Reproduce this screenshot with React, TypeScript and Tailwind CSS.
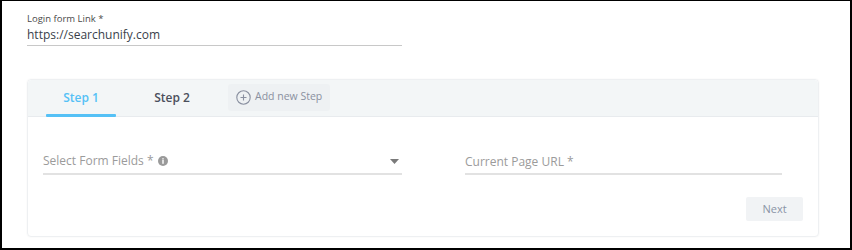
import React from "react";

export default function App() {
  return (
    <div
      className="w-[852px] h-[250px] bg-white border-black border-t border-l-2 border-r-2 border-b-2 box-border overflow-hidden"
      style={{ fontFamily: '"Open Sans", "Liberation Sans", sans-serif' }}
    >
      <div className="pl-[25px] pt-[11px]">
        <div className="w-[375px]">
          <div className="text-[9.5px] leading-[14px] text-[#4a4a4a]">Login form Link *</div>
          <div className="text-[12px] leading-[16px] text-[#3a3f4b] pt-[1px] pb-[2px] border-b border-[#c8c8c8]">
            https://searchunify.com
          </div>
        </div>
        <div className="mt-[33px] w-[792px] h-[158px] rounded-[4px] border border-[#eef0f2] shadow-[0_0_2px_rgba(0,0,0,0.05)] flex flex-col">
          <div className="h-[37px] bg-[#f3f6f7] border-b border-[#e8ebee] flex items-stretch pl-[18px] rounded-t-[4px]">
            <div className="relative w-[70px] flex items-center justify-center">
              <span className="text-[12px] font-semibold text-[#55c1f6]">Step 1</span>
              <div className="absolute left-0 right-0 bottom-[-1px] h-[3px] bg-[#55c1f6] rounded-[1px]" />
            </div>
            <div className="w-[112px] flex items-center justify-center">
              <span className="text-[12px] font-semibold text-[#4b4f5c]">Step 2</span>
            </div>
            <div className="flex items-center">
              <div className="h-[27px] pl-[8px] pr-[8px] flex items-center gap-[4px] bg-[#eef1f3] rounded-[3px] mt-[-2px]">
                <svg width="15" height="15" viewBox="0 0 15 15" fill="none" stroke="#8a90a0" strokeWidth="1.1">
                  <circle cx="7.5" cy="7.5" r="6.7" />
                  <path d="M7.5 4.5v6M4.5 7.5h6" />
                </svg>
                <span className="text-[10.5px] text-[#8a90a0]">Add new Step</span>
              </div>
            </div>
          </div>
          <div className="flex-1 flex flex-col px-[15px]">
            <div className="flex mt-[35px]">
              <div className="w-[359px] flex items-center justify-between pb-[3px] border-b-2 border-[#e2e2e2]">
                <div className="flex items-center gap-[4px] leading-[16px]">
                  <span className="text-[12px] text-[#9b9b9b]">Select Form Fields *</span>
                  <svg width="10" height="10" viewBox="0 0 10 10">
                    <circle cx="5" cy="5" r="5" fill="#9a9a9a" />
                    <rect x="4.3" y="4" width="1.4" height="3.8" fill="#fff" />
                    <rect x="4.3" y="2.2" width="1.4" height="1.3" fill="#fff" />
                  </svg>
                </div>
                <svg width="9" height="5" viewBox="0 0 9 5" className="mr-[3px]">
                  <path d="M0 0h9L4.5 5z" fill="#7a7a7a" />
                </svg>
              </div>
              <div className="ml-[63px] w-[317px] pb-[3px] border-b-2 border-[#e2e2e2] leading-[16px]">
                <span className="text-[12px] text-[#9b9b9b]">Current Page URL *</span>
              </div>
            </div>
            <div className="flex justify-end mt-[22px]">
              <div className="w-[57px] h-[24px] bg-[#f1f3f5] rounded-[2px] flex items-center justify-center text-[11px] text-[#8a94a6]">
                Next
              </div>
            </div>
          </div>
        </div>
      </div>
    </div>
  );
}
